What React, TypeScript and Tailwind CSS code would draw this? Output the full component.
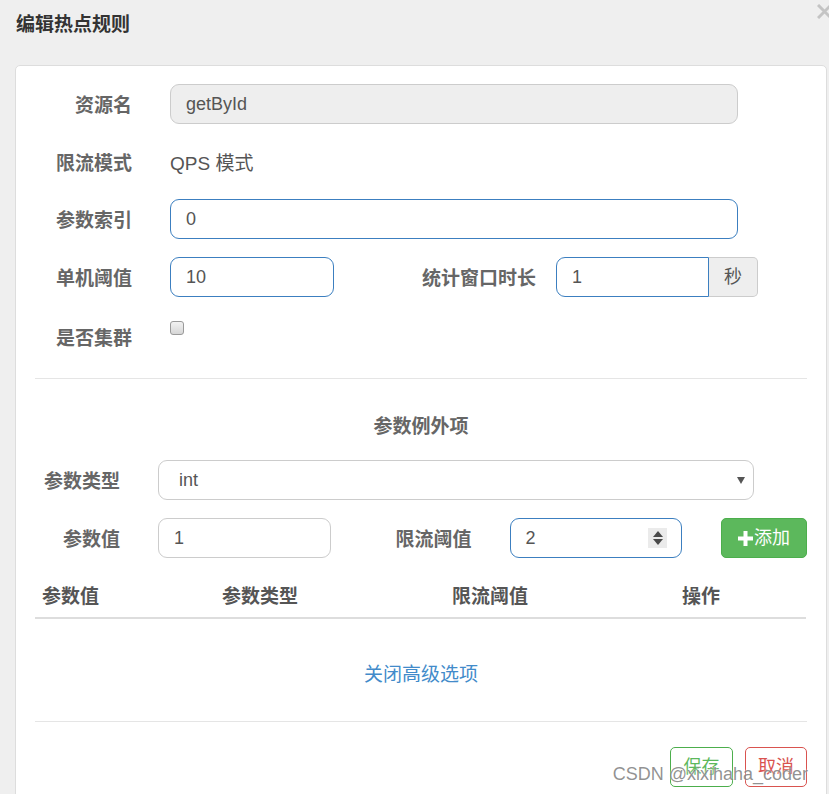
import React from 'react';

const labelCls = 'shrink-0 text-right text-[19px] font-bold leading-[24px] text-[#666] pt-[3px]';
const inputBase = 'h-[40px] rounded-[9px] border px-[15px] flex items-center text-[18px] text-[#555]';

function Spinner() {
  return (
    <div className="w-[19px] h-[20px] bg-[#ebebeb] flex flex-col items-center justify-center gap-[2px]">
      <svg width="10" height="6" viewBox="0 0 10 6">
        <path d="M5 0 L10 6 L0 6 Z" fill="#4a4a4a" />
      </svg>
      <svg width="10" height="6" viewBox="0 0 10 6">
        <path d="M0 0 L10 0 L5 6 Z" fill="#4a4a4a" />
      </svg>
    </div>
  );
}

export default function App() {
  return (
    <div className="relative w-[829px] h-[794px] overflow-hidden bg-[#efefef] font-['Liberation_Sans','Noto_Sans_CJK_SC',sans-serif]">
      {/* header */}
      <div className="h-[65px] px-[16px] pt-[13px]">
        <h4 className="text-[19px] font-bold leading-[24px] text-[#333]">编辑热点规则</h4>
      </div>
      <svg className="absolute left-[817px] top-[4px]" width="15" height="15" viewBox="0 0 15 15">
        <path d="M1 1 L14 14 M14 1 L1 14" stroke="#c4c4c4" strokeWidth="3" />
      </svg>

      {/* body panel */}
      <div className="ml-[15px] w-[812px] h-[760px] rounded-[5px] border border-[#ddd] bg-white px-[19px] pt-[18px]">
        <div className="flex h-[40px] items-center gap-[38px]">
          <div className={`${labelCls} w-[97px]`}>资源名</div>
          <div className={`${inputBase} w-[568px] border-[#ccc] bg-[#eee]`}>getById</div>
        </div>

        <div className="mt-[18px] flex h-[40px] items-center gap-[38px]">
          <div className={`${labelCls} w-[97px]`}>限流模式</div>
          <div className="pt-[3px] text-[19px] leading-[24px] text-[#555]">QPS 模式</div>
        </div>

        <div className="mt-[17px] flex h-[40px] items-center gap-[38px]">
          <div className={`${labelCls} w-[97px]`}>参数索引</div>
          <div className={`${inputBase} w-[568px] border-[#3c7fc0]`}>0</div>
        </div>

        <div className="mt-[18px] flex h-[40px] items-center">
          <div className={`${labelCls} w-[97px] mr-[38px]`}>单机阈值</div>
          <div className={`${inputBase} w-[164px] border-[#3c7fc0]`}>10</div>
          <div className={`${labelCls} w-[202px] mr-[20px]`}>统计窗口时长</div>
          <div className="flex">
            <div className={`${inputBase} w-[153px] rounded-r-none border-[#3c7fc0]`}>1</div>
            <div className="flex h-[40px] w-[49px] items-center justify-center rounded-r-[5px] border border-l-0 border-[#ccc] bg-[#eee] text-[18px] text-[#555]">
              秒
            </div>
          </div>
        </div>

        <div className="mt-[18px] flex h-[40px] items-center gap-[38px]">
          <div className={`${labelCls} w-[97px] pt-[7px]`}>是否集群</div>
          <div className="self-start mt-[6px] h-[14px] w-[14px] rounded-[3px] border border-[#9a9a9a] bg-gradient-to-b from-[#f2f2f2] to-[#d6d6d6]" />
        </div>

        <div className="mt-[23px] h-px bg-[#e5e5e5]" />

        <div className="mt-[36px] text-center text-[19px] font-bold leading-[24px] text-[#666]">参数例外项</div>

        <div className="mt-[21px] flex h-[40px] items-center gap-[38px]">
          <div className={`${labelCls} w-[85px]`}>参数类型</div>
          <div className={`${inputBase} w-[596px] justify-between border-[#ccc] pl-[20px] pr-[8px]`}>
            <span>int</span>
            <svg width="8" height="7" viewBox="0 0 8 7">
              <path d="M0 0 L8 0 L4 7 Z" fill="#555" />
            </svg>
          </div>
        </div>

        <div className="mt-[18px] flex h-[40px] items-center">
          <div className={`${labelCls} w-[85px] mr-[38px]`}>参数值</div>
          <div className={`${inputBase} w-[173px] border-[#ccc]`}>1</div>
          <div className={`${labelCls} w-[141px] mr-[38px]`}>限流阈值</div>
          <div className={`${inputBase} w-[173px] justify-between border-[#3c7fc0] pr-[14px]`}>
            <span>2</span>
            <Spinner />
          </div>
          <button className="ml-[39px] flex h-[40px] w-[86px] items-center justify-center gap-[1px] rounded-[5px] border border-[#4cae4c] bg-[#5cb85c] text-[18px] text-white">
            <svg width="15" height="15" viewBox="0 0 15 15">
              <path d="M5.5 0 H9.5 V5.5 H15 V9.5 H9.5 V15 H5.5 V9.5 H0 V5.5 H5.5 Z" fill="#fff" />
            </svg>
            添加
          </button>
        </div>

        <table className="mt-[19px] w-[771px] table-fixed border-collapse">
          <thead>
            <tr className="border-b-2 border-[#ddd] text-left text-[19px] font-bold leading-[24px] text-[#555]">
              <th className="w-[180px] px-[7px] py-[8px] font-bold">参数值</th>
              <th className="w-[230px] px-[7px] py-[8px] font-bold">参数类型</th>
              <th className="w-[230px] px-[7px] py-[8px] font-bold">限流阈值</th>
              <th className="px-[7px] py-[8px] font-bold">操作</th>
            </tr>
          </thead>
        </table>

        <div className="mt-[44px] text-center text-[19px] leading-[24px] text-[#428bca]">关闭高级选项</div>

        <div className="mt-[34px] h-px bg-[#e5e5e5]" />

        <div className="mt-[25px] flex justify-end gap-[12px]">
          <button className="h-[40px] w-[63px] rounded-[5px] border border-[#4cae4c] text-[18px] text-[#5cb85c]">保存</button>
          <button className="h-[40px] w-[62px] rounded-[5px] border border-[#d9534f] text-[18px] text-[#d9534f]">取消</button>
        </div>
      </div>

      <div className="absolute bottom-[10px] right-[21px] text-[18px] leading-[20px] text-[rgba(110,110,110,0.75)] [text-shadow:0_0_2px_#fff]">
        CSDN @xixihaha_coder
      </div>
    </div>
  );
}
